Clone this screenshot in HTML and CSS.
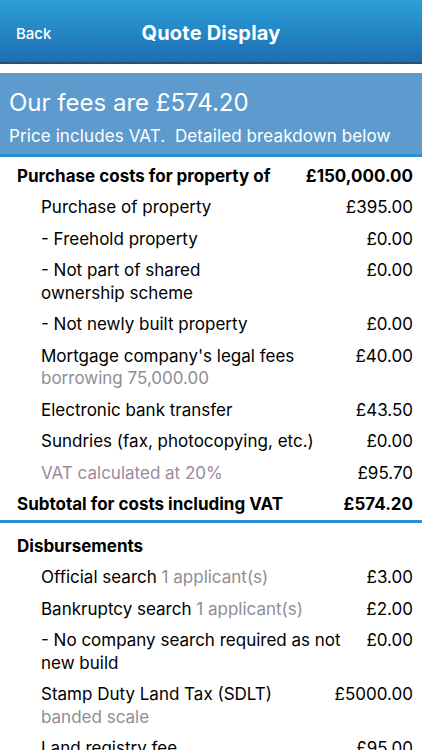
FILE: index.html
```html
<!DOCTYPE html>
<html lang="en">
<head>
<meta charset="utf-8">
<title>Quote Display</title>
<link rel="stylesheet" href="styles.css">
</head>
<body>
<header class="navbar">
  <span class="nav-back">Back</span>
  <h1 class="nav-title">Quote Display</h1>
</header>

<section class="summary">
  <p class="summary-total">Our fees are £574.20</p>
  <p class="summary-note">Price includes VAT.&nbsp; Detailed breakdown below</p>
</section>

<section class="group">
  <div class="row row-head">
    <span class="label">Purchase costs for property of</span>
    <span class="value">£150,000.00</span>
  </div>
  <div class="row item">
    <span class="label">Purchase of property</span>
    <span class="value">£395.00</span>
  </div>
  <div class="row item">
    <span class="label">- Freehold property</span>
    <span class="value">£0.00</span>
  </div>
  <div class="row item">
    <span class="label">- Not part of shared<br>ownership scheme</span>
    <span class="value">£0.00</span>
  </div>
  <div class="row item">
    <span class="label">- Not newly built property</span>
    <span class="value">£0.00</span>
  </div>
  <div class="row item">
    <span class="label">Mortgage company's legal fees<br><span class="muted">borrowing 75,000.00</span></span>
    <span class="value">£40.00</span>
  </div>
  <div class="row item">
    <span class="label">Electronic bank transfer</span>
    <span class="value">£43.50</span>
  </div>
  <div class="row item">
    <span class="label">Sundries (fax, photocopying, etc.)</span>
    <span class="value">£0.00</span>
  </div>
  <div class="row item vat">
    <span class="label">VAT calculated at 20%</span>
    <span class="value">£95.70</span>
  </div>
  <div class="row row-head">
    <span class="label">Subtotal for costs including VAT</span>
    <span class="value">£574.20</span>
  </div>
</section>

<section class="group group-split">
  <div class="row row-head">
    <span class="label">Disbursements</span>
  </div>
  <div class="row item">
    <span class="label">Official search <span class="muted">1 applicant(s)</span></span>
    <span class="value">£3.00</span>
  </div>
  <div class="row item">
    <span class="label">Bankruptcy search <span class="muted">1 applicant(s)</span></span>
    <span class="value">£2.00</span>
  </div>
  <div class="row item">
    <span class="label">- No company search required as not<br>new build</span>
    <span class="value">£0.00</span>
  </div>
  <div class="row item">
    <span class="label">Stamp Duty Land Tax (SDLT)<br><span class="muted">banded scale</span></span>
    <span class="value">£5000.00</span>
  </div>
  <div class="row item">
    <span class="label">Land registry fee</span>
    <span class="value">£95.00</span>
  </div>
</section>
</body>
</html>
```

FILE: styles.css
```css
* { box-sizing: border-box; }

html, body {
  margin: 0;
  padding: 0;
  background: #ffffff;
}

body {
  font-family: Inter, "Liberation Sans", Arial, sans-serif;
  color: #000000;
  overflow: hidden;
}

/* top navigation bar with a brushed blue finish */
.navbar {
  position: relative;
  height: 64px;
  display: flex;
  align-items: center;
  justify-content: center;
  padding-top: 4px;
  border-bottom: 2px solid #2d4c6e;
  background:
    repeating-linear-gradient(115deg, rgba(255,255,255,0.015) 0 1px, rgba(0,0,0,0.015) 1px 3px),
    repeating-linear-gradient(35deg, rgba(255,255,255,0.015) 0 2px, rgba(0,0,0,0.01) 2px 3px),
    linear-gradient(180deg, #2aa0d8 0%, #2289c9 45%, #1b6cb3 100%);
  color: #ffffff;
}

.nav-back {
  position: absolute;
  left: 16px;
  top: 25px;
  font-size: 15px;
  font-weight: 500;
  line-height: 18px;
}

.nav-title {
  margin: 0;
  font-size: 20px;
  font-weight: 700;
  line-height: 24px;
  letter-spacing: 0.2px;
}

/* fee summary banner */
.summary {
  margin-top: 9px;
  background: #5d9bcf;
  border-bottom: 3px solid #2b8fd1;
  color: #ffffff;
  padding: 14px 9px 6px;
}

.summary p { margin: 0; }

.summary-total {
  font-size: 24px;
  font-weight: 400;
  line-height: 32px;
}

.summary-note {
  margin-top: 5px !important;
  font-size: 17px;
  line-height: 24px;
  letter-spacing: 0.1px;
}

/* breakdown tables */
.group {
  padding: 3px 9px 0 17px;
}

.group-split {
  border-top: 3px solid #2b8fd1;
  padding-top: 7px;
}

.row {
  display: flex;
  justify-content: space-between;
  align-items: flex-start;
  gap: 12px;
  font-size: 17px;
  line-height: 22.5px;
  padding: 4.5px 0;
}

.row-head {
  font-weight: 700;
}

.item {
  padding-left: 24px;
}

.value {
  white-space: nowrap;
  text-align: right;
}

.muted {
  color: #8e8e93;
}

.vat .label {
  color: #9b8a9e;
}
```
